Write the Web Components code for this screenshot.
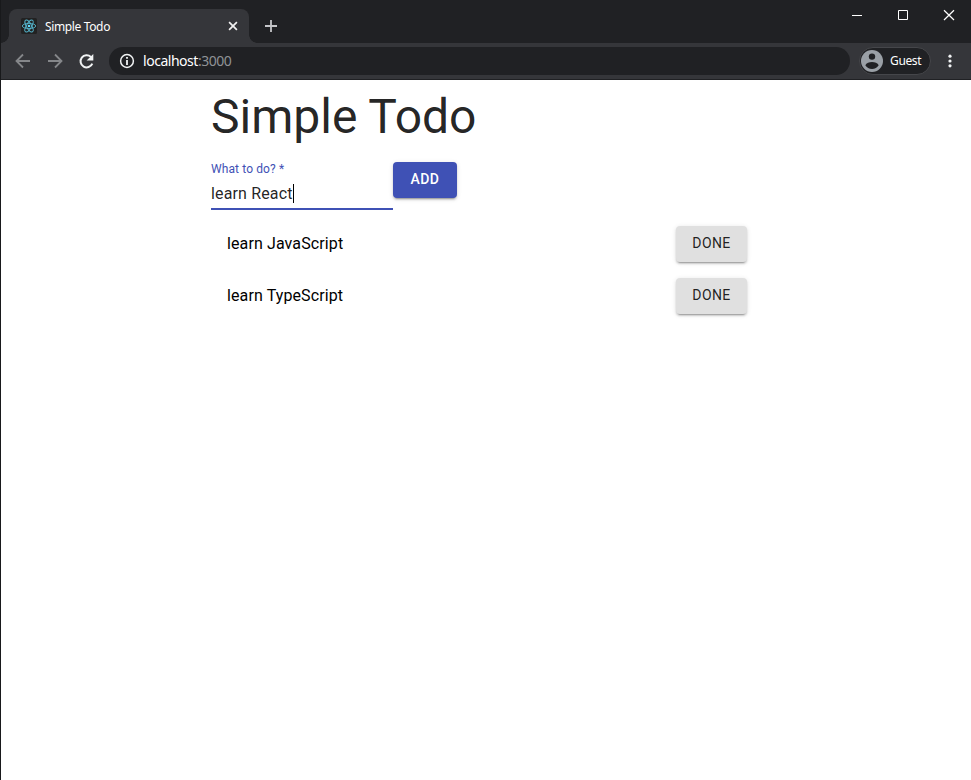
<!DOCTYPE html>
<html lang="en"><head><meta charset="utf-8"><title>Simple Todo</title>
<style>
html,body{margin:0;height:100%;overflow:hidden;background:#fff}
body{font-family:Roboto,sans-serif}
</style></head><body>
<browser-window>
  <browser-tab slot="tabs">Simple Todo</browser-tab>
  <address-bar slot="toolbar" host="localhost" port=":3000"></address-bar>
  <todo-app heading="Simple Todo">
    <text-field slot="form" label="What to do? *">learn React</text-field>
    <md-button slot="form" primary>Add</md-button>
    <todo-item>learn JavaScript</todo-item>
    <todo-item>learn TypeScript</todo-item>
  </todo-app>
</browser-window>
<script>
const define = (name, html) => customElements.define(name, class extends HTMLElement {
  constructor() {
    super();
    const t = document.createElement('template');
    t.innerHTML = html;
    this.attachShadow({mode: 'open'}).append(t.content.cloneNode(true));
    this.shadowRoot.querySelectorAll('[data-attr]').forEach(el => {
      el.textContent = this.getAttribute(el.dataset.attr);
    });
  }
});

define('window-controls', `
<style>
:host{display:flex;height:30px;width:138px}
svg{width:46px;height:30px;fill:none;stroke:#fff;stroke-width:1}
</style>
<svg viewBox="0 0 46 30"><path d="M19 15.5h10"/></svg>
<svg viewBox="0 0 46 30"><path d="M19.5 10.5h9v9h-9z"/></svg>
<svg viewBox="0 0 46 30"><path d="M19 10.2l10 9.8M29 10.2l-10 9.8" stroke-width="1.2"/></svg>
`);

define('browser-tab', `
<style>
:host{display:flex;align-items:center;box-sizing:border-box;width:256px;height:34px;padding:0 8px;
 font:12px "Noto Sans",sans-serif;color:#fff;
 background:
  radial-gradient(circle at 0 0,transparent 7.5px,#35363a 8px) 0 100%/8px 8px no-repeat,
  radial-gradient(circle at 100% 0,transparent 7.5px,#35363a 8px) 100% 100%/8px 8px no-repeat}
.tab{display:flex;align-items:center;width:240px;height:34px;box-sizing:border-box;padding:0 10px 0 12px;background:#35363a;border-radius:8px 8px 0 0}
.text{flex:1;margin-left:8px;letter-spacing:-.36px;white-space:nowrap}
</style>
<div class="tab">
<svg width="16" height="16" viewBox="0 0 16 16"><rect width="16" height="16" rx="1.5" fill="#222"/>
<g fill="none" stroke="#55b5cd" stroke-width=".9"><ellipse cx="8" cy="8" rx="6.7" ry="2.6"/><ellipse cx="8" cy="8" rx="6.7" ry="2.6" transform="rotate(60 8 8)"/><ellipse cx="8" cy="8" rx="6.7" ry="2.6" transform="rotate(120 8 8)"/></g><circle cx="8" cy="8" r="1.3" fill="#61dafb"/></svg>
<span class="text"><slot></slot></span>
<svg width="12" height="12" viewBox="0 0 12 12" stroke="#f1f1f1" stroke-width="1.7"><path d="M2.1 2.1l7.8 7.8M9.9 2.1L2.1 9.9"/></svg>
</div>`);

define('address-bar', `
<style>
:host{display:flex;align-items:center;height:36px;background:#35363a;border-bottom:1px solid #202124;padding-left:11px;font-family:"Noto Sans",sans-serif}
.nav{width:20px;height:20px;margin-right:12px}
.box{display:flex;align-items:center;box-sizing:border-box;width:741px;height:28px;padding-left:9px;border-radius:14px;background:#202124;color:#fff;font-size:14px}
.box svg{margin-right:7px}
.box .url{letter-spacing:-.47px;white-space:nowrap;line-height:18px;padding-bottom:1px}
.port{color:#8f9296}
.guest{display:flex;align-items:center;box-sizing:border-box;width:72px;height:28px;margin-left:9px;padding-left:1px;border:1px solid #45464a;border-radius:14px;background:#202124;color:#fff;font-size:12px}
.guest svg{margin-right:7px}
.guest span{letter-spacing:-.35px;line-height:16px;padding-bottom:1px}
.menu{margin-left:7px}
</style>
<svg class="nav" viewBox="0 0 20 20" fill="none" stroke="#85878a" stroke-width="1.8"><path d="M18 10H5M11 3.5L4.5 10l6.5 6.5"/></svg>
<svg class="nav" viewBox="0 0 20 20" fill="none" stroke="#85878a" stroke-width="1.8"><path d="M4 10h13M11 3.5l6.5 6.5-6.5 6.5"/></svg>
<svg class="nav" style="margin-right:13px" viewBox="0 0 20 20"><path d="M16.300 12.600A6.100 6.100 0 1 1 14.900 5.900" fill="none" stroke="#f1f3f4" stroke-width="2"/><path d="M17.300 2.900v6.700h-6.700z" fill="#f1f3f4"/></svg>
<div class="box"><svg width="18" height="18" viewBox="0 0 18 18"><circle cx="9" cy="9" r="6.4" fill="none" stroke="#f1f3f4" stroke-width="1.5"/><path d="M8.1 5h1.8v1.8H8.1zM8.1 8.1h1.8V13H8.1z" fill="#f1f3f4"/></svg>
<span class="url"><span data-attr="host"></span><span class="port" data-attr="port"></span></span></div>
<div class="guest"><svg width="22" height="22" viewBox="0 0 22 22"><circle cx="11" cy="11" r="11" fill="#9aa0a6"/><circle cx="11" cy="6.6" r="3.2" fill="#202124"/><path d="M4.3 15.3c1-2.2 4-3.3 6.7-3.3s5.7 1.1 6.7 3.3C16.3 17.6 13.8 19 11 19s-5.3-1.4-6.7-3.7z" fill="#202124"/></svg><span>Guest</span></div>
<svg class="menu" width="24" height="24" viewBox="0 0 24 24" fill="#f1f3f4"><circle cx="12" cy="7.2" r="1.6"/><circle cx="12" cy="12" r="1.6"/><circle cx="12" cy="16.8" r="1.6"/></svg>
`);

define('browser-window', `
<style>
:host{display:flex;flex-direction:column;box-sizing:border-box;height:100vh;border-left:1px solid #18191b;background:#fff}
.strip{display:flex;height:43px;background:#202124;overflow:hidden}
.tabs{align-self:flex-end}
.plus{margin:19px 0 0 6px}
window-controls{margin-left:auto}
</style>
<div class="strip"><div class="tabs"><slot name="tabs"></slot></div>
<svg class="plus" width="16" height="14" viewBox="0 0 16 14" stroke="#c5c6c9" stroke-width="1.8"><path d="M2 7h12M8 1v12"/></svg>
<window-controls></window-controls></div>
<slot name="toolbar"></slot><slot></slot>`);

define('todo-app', `
<style>
:host{display:block;width:552px;margin:0 auto;padding:9px 0 0 2px;box-sizing:content-box}
h1{font:400 48px/56px Roboto,sans-serif;margin:0 0 17px;color:rgba(0,0,0,.87)}
form{display:flex;align-items:flex-start;margin:0}
.list{padding:8px 0}
</style>
<h1 data-attr="heading"></h1>
<form><slot name="form"></slot></form>
<div class="list"><slot></slot></div>`);

define('text-field', `
<style>
:host{display:block;box-sizing:border-box;width:182px;height:48px;border-bottom:2px solid #3f51b5}
.label{font-size:12px;line-height:12px;padding-top:1px;letter-spacing:.11px;color:#3f51b5}
.value{display:flex;align-items:center;margin-top:9px;height:19px;font-size:16px;line-height:19px;letter-spacing:.15px;color:rgba(0,0,0,.87)}
i{width:1px;height:19px;background:#000}
</style>
<div class="label" data-attr="label"></div><div class="value"><span><slot></slot></span><i></i></div>`);

define('md-button', `
<style>
:host{display:flex;align-items:center;justify-content:center;box-sizing:border-box;min-width:64px;height:36px;padding:0 16px 1px;border-radius:4px;background:#e0e0e0;color:rgba(0,0,0,.87);
font:400 14px/23px Roboto,sans-serif;letter-spacing:.4px;text-transform:uppercase;
box-shadow:0 3px 1px -2px rgba(0,0,0,.2),0 2px 2px 0 rgba(0,0,0,.14),0 1px 5px 0 rgba(0,0,0,.12)}
:host([primary]){background:#3f51b5;color:#fff;font-weight:500}
</style><slot></slot>`);

define('todo-item', `
<style>
:host{display:flex;align-items:center;justify-content:space-between;height:52px;box-sizing:border-box;padding:8px 16px;font-size:16px;line-height:24px;letter-spacing:.11px;color:#000}
md-button{width:71px}
</style><span><slot></slot></span><md-button>Done</md-button>`);
</script>
</body></html>
